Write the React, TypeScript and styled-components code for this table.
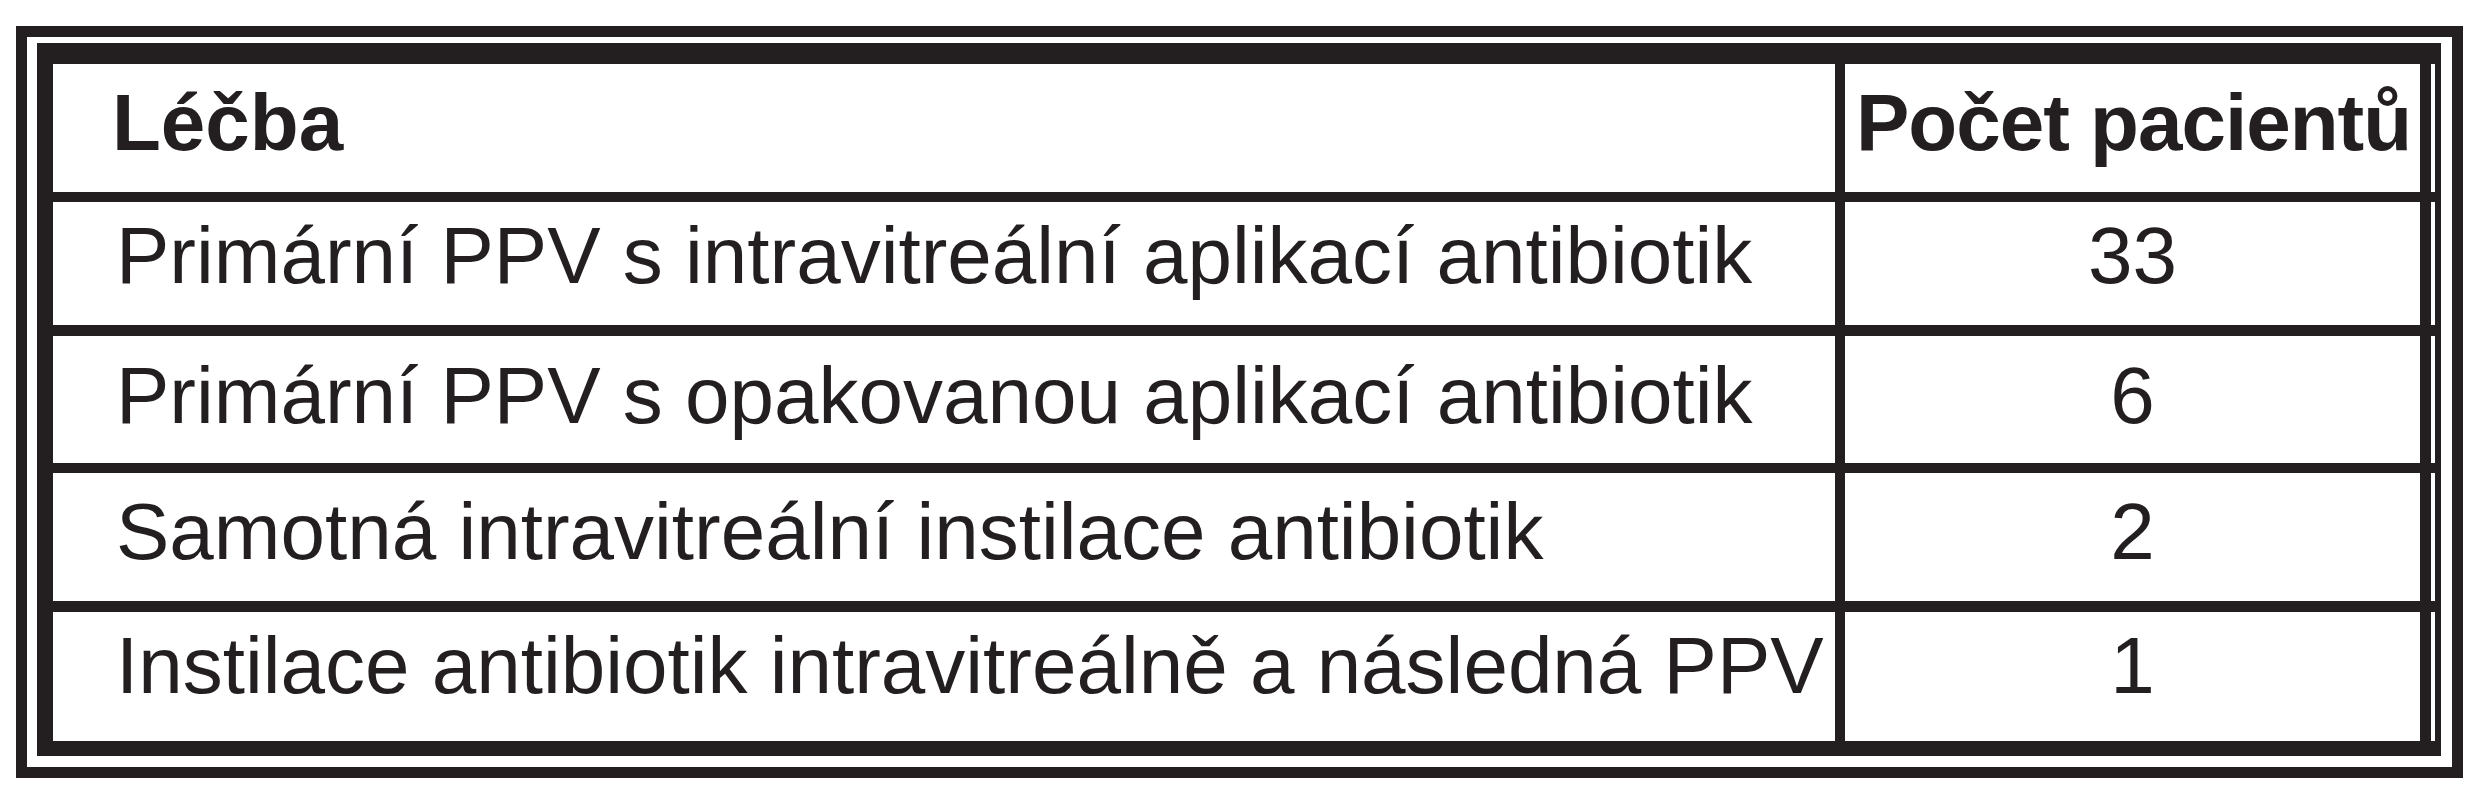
import styled, { createGlobalStyle } from "styled-components";

const ink = "#231f20";

const GlobalStyle = createGlobalStyle`
  html, body {
    margin: 0;
    padding: 0;
    background: #ffffff;
  }
  body {
    font-family: "Liberation Sans", Arial, sans-serif;
    color: ${ink};
  }
`;

const Page = styled.div`
  padding: 26px 0 0 16px;
  width: 2485px;
  height: 800px;
  box-sizing: border-box;
`;

const Frame = styled.div`
  width: 2447px;
  height: 752px;
  box-sizing: border-box;
  border: 11px solid ${ink};
  padding: 6px 11px 11px 10px;
`;

const Table = styled.div`
  display: flex;
  flex-direction: column;
  height: 100%;
  box-sizing: border-box;
  border-style: solid;
  border-color: ${ink};
  border-width: 21px 6px 15px 16px;
`;

const Row = styled.div<{ $height: number; $line: number }>`
  display: flex;
  height: ${(p) => p.$height + p.$line}px;
  box-sizing: border-box;
  border-bottom: ${(p) => p.$line}px solid ${ink};
`;

const LabelCell = styled.div<{ $top: number }>`
  width: 1792px;
  box-sizing: border-box;
  border-right: 10px solid ${ink};
  padding: ${(p) => p.$top}px 0 0 63px;
  font-size: 80px;
  white-space: nowrap;
`;

const CountCell = styled.div<{ $top: number }>`
  width: 586px;
  box-sizing: border-box;
  border-right: 11px solid ${ink};
  padding-top: ${(p) => p.$top}px;
  font-size: 80px;
  text-align: center;
  white-space: nowrap;
`;

const HeadLabel = styled(LabelCell)`
  font-weight: bold;
  padding-left: 59px;
`;

const HeadCount = styled(CountCell)`
  font-weight: bold;
  text-align: left;
  padding-left: 11px;
  letter-spacing: -1px;
`;

interface Treatment {
  label: string;
  count: number;
  height: number;
  line: number;
  top: number;
}

const treatments: Treatment[] = [
  { label: "Primární PPV s intravitreální aplikací antibiotik", count: 33, height: 123, line: 11, top: 8 },
  { label: "Primární PPV s opakovanou aplikací antibiotik", count: 6, height: 128, line: 10, top: 14 },
  { label: "Samotná intravitreální instilace antibiotik", count: 2, height: 128, line: 11, top: 13 },
  { label: "Instilace antibiotik intravitreálně a následná PPV", count: 1, height: 129, line: 0, top: 8 },
];

export default function App() {
  return (
    <Page>
      <GlobalStyle />
      <Frame>
        <Table>
          <Row $height={128} $line={10}>
            <HeadLabel $top={13}>Léčba</HeadLabel>
            <HeadCount $top={13}>Počet pacientů</HeadCount>
          </Row>
          {treatments.map((t) => (
            <Row key={t.label} $height={t.height} $line={t.line}>
              <LabelCell $top={t.top}>{t.label}</LabelCell>
              <CountCell $top={t.top}>{t.count}</CountCell>
            </Row>
          ))}
        </Table>
      </Frame>
    </Page>
  );
}
